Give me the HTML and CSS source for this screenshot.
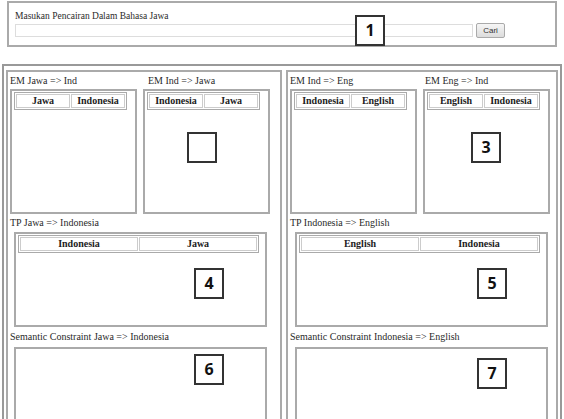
FILE: index.html
```html
<!DOCTYPE html>
<html lang="id">
<head>
  <meta charset="UTF-8">
  <title>Pencarian Bahasa Jawa</title>
  <link rel="stylesheet" href="styles.css">
</head>
<body>
  <div class="search">
    <div class="search-label">Masukan Pencairan Dalam Bahasa Jawa</div>
    <div class="search-row">
      <input type="text" class="search-input">
      <button type="button" class="search-btn">Cari</button>
    </div>
    <span class="badge badge-1">1</span>
  </div>

  <div class="main">
    <div class="panel panel-left">
      <div class="em-row">
        <div class="em-col">
          <div class="label">EM Jawa =&gt; Ind</div>
          <div class="em-box">
            <table class="head"><tr><th>Jawa</th><th>Indonesia</th></tr></table>
          </div>
        </div>
        <div class="em-col em-col-2">
          <div class="label">EM Ind =&gt; Jawa</div>
          <div class="em-box">
            <table class="head"><tr><th>Indonesia</th><th>Jawa</th></tr></table>
            <span class="badge badge-2"></span>
          </div>
        </div>
      </div>

      <div class="label">TP Jawa =&gt; Indonesia</div>
      <div class="tp-box">
        <table class="head head-wide"><tr><th>Indonesia</th><th>Jawa</th></tr></table>
        <span class="badge badge-4">4</span>
      </div>

      <div class="label label-sc">Semantic Constraint Jawa =&gt; Indonesia</div>
      <div class="sc-box">
        <span class="badge badge-6">6</span>
      </div>
    </div>

    <div class="panel panel-right">
      <div class="em-row">
        <div class="em-col">
          <div class="label">EM Ind =&gt; Eng</div>
          <div class="em-box">
            <table class="head"><tr><th>Indonesia</th><th>English</th></tr></table>
          </div>
        </div>
        <div class="em-col em-col-2">
          <div class="label">EM Eng =&gt; Ind</div>
          <div class="em-box">
            <table class="head"><tr><th>English</th><th>Indonesia</th></tr></table>
            <span class="badge badge-3">3</span>
          </div>
        </div>
      </div>

      <div class="label">TP Indonesia =&gt; English</div>
      <div class="tp-box">
        <table class="head head-wide"><tr><th>English</th><th>Indonesia</th></tr></table>
        <span class="badge badge-5">5</span>
      </div>

      <div class="label label-sc">Semantic Constraint Indonesia =&gt; English</div>
      <div class="sc-box">
        <span class="badge badge-7">7</span>
      </div>
    </div>
  </div>
</body>
</html>
```

FILE: styles.css
```css
html, body {
  margin: 0;
  padding: 0;
}
body {
  width: 564px;
  height: 419px;
  overflow: hidden;
  background: #fff;
  color: #2a2a2a;
  font-family: 'Liberation Serif', 'Times New Roman', serif;
  font-size: 10px;
}
.search {
  position: relative;
  box-sizing: border-box;
  width: 550px;
  height: 46px;
  margin: 1px 0 0 7px;
  border: 2px solid #aaa;
  padding: 7px 6px 0 6px;
}
.search-label {
  font-size: 9.5px;
  line-height: 12px;
  height: 12px;
}
.search-row {
  display: flex;
  align-items: center;
  gap: 3px;
  margin-top: 1px;
}
.search-input {
  box-sizing: border-box;
  width: 458px;
  height: 13px;
  margin: 0;
  border: 1px solid #ddd;
  padding: 0;
}
.search-btn {
  box-sizing: border-box;
  width: 29px;
  height: 15px;
  margin: 0;
  padding: 0;
  border: 1px solid #aaa;
  border-radius: 2px;
  background: linear-gradient(#f6f6f6, #dcdcdc);
  font-family: 'Liberation Sans', Arial, sans-serif;
  font-size: 8px;
  color: #333;
}
.main {
  box-sizing: border-box;
  width: 560px;
  height: 355px;
  margin: 17px 0 0 2px;
  border: 2px solid #999;
  border-bottom: 0;
  padding: 4px 2px 0 2px;
  display: flex;
  gap: 4px;
}
.panel {
  box-sizing: border-box;
  display: flex;
  flex-direction: column;
  border: 2px solid #aaa;
  border-bottom: 0;
  padding: 0 2px;
}
.panel-left {
  width: 276px;
}
.panel-right {
  width: 272px;
}
.em-row {
  display: flex;
  gap: 6px;
}
.em-col {
  width: 127px;
}
.em-col-2 .label {
  padding-left: 5px;
}
.panel-right .em-col-2 .label {
  padding-left: 2px;
}
.label {
  height: 17px;
  line-height: 12px;
  padding-top: 3px;
  box-sizing: border-box;
  white-space: nowrap;
}
.panel > .label {
  height: 18px;
  padding-top: 3px;
}
.panel > .label-sc {
  height: 20px;
  padding-top: 4px;
}
.em-box,
.tp-box,
.sc-box {
  position: relative;
  box-sizing: border-box;
  border: 2px solid #aaa;
  padding: 1px 2px;
}
.em-box {
  height: 125px;
}
.tp-box,
.sc-box {
  width: 253px;
  margin-left: 4px;
}
.tp-box {
  height: 95px;
}
.sc-box {
  flex: 1;
  border-bottom: 0;
}
.panel-right .tp-box,
.panel-right .sc-box {
  margin-left: 5px;
}
.head {
  border: 1px solid #aaa;
  border-spacing: 1px;
  width: 113px;
  table-layout: fixed;
}
.head-wide {
  width: 241px;
}
.head th {
  border: 1px solid #ccc;
  padding: 0;
  height: 12px;
  line-height: 12px;
  font-size: 10px;
  font-weight: bold;
  color: #222;
}
.badge {
  position: absolute;
  box-sizing: border-box;
  width: 30px;
  height: 31px;
  border: 2px solid #333;
  background: #fff;
  font-family: 'Open Sans', 'Liberation Sans', sans-serif;
  font-weight: 700;
  font-size: 16px;
  line-height: 27px;
  text-align: center;
  color: #111;
}
.badge-1 { left: 346px; top: 12px; }
.badge-2 { left: 42px; top: 41px; }
.badge-3 { left: 46px; top: 41px; }
.badge-4 { left: 178px; top: 34px; }
.badge-5 { left: 180px; top: 34px; }
.badge-6 { left: 178px; top: 5px; }
.badge-7 { left: 180px; top: 9px; }
```
